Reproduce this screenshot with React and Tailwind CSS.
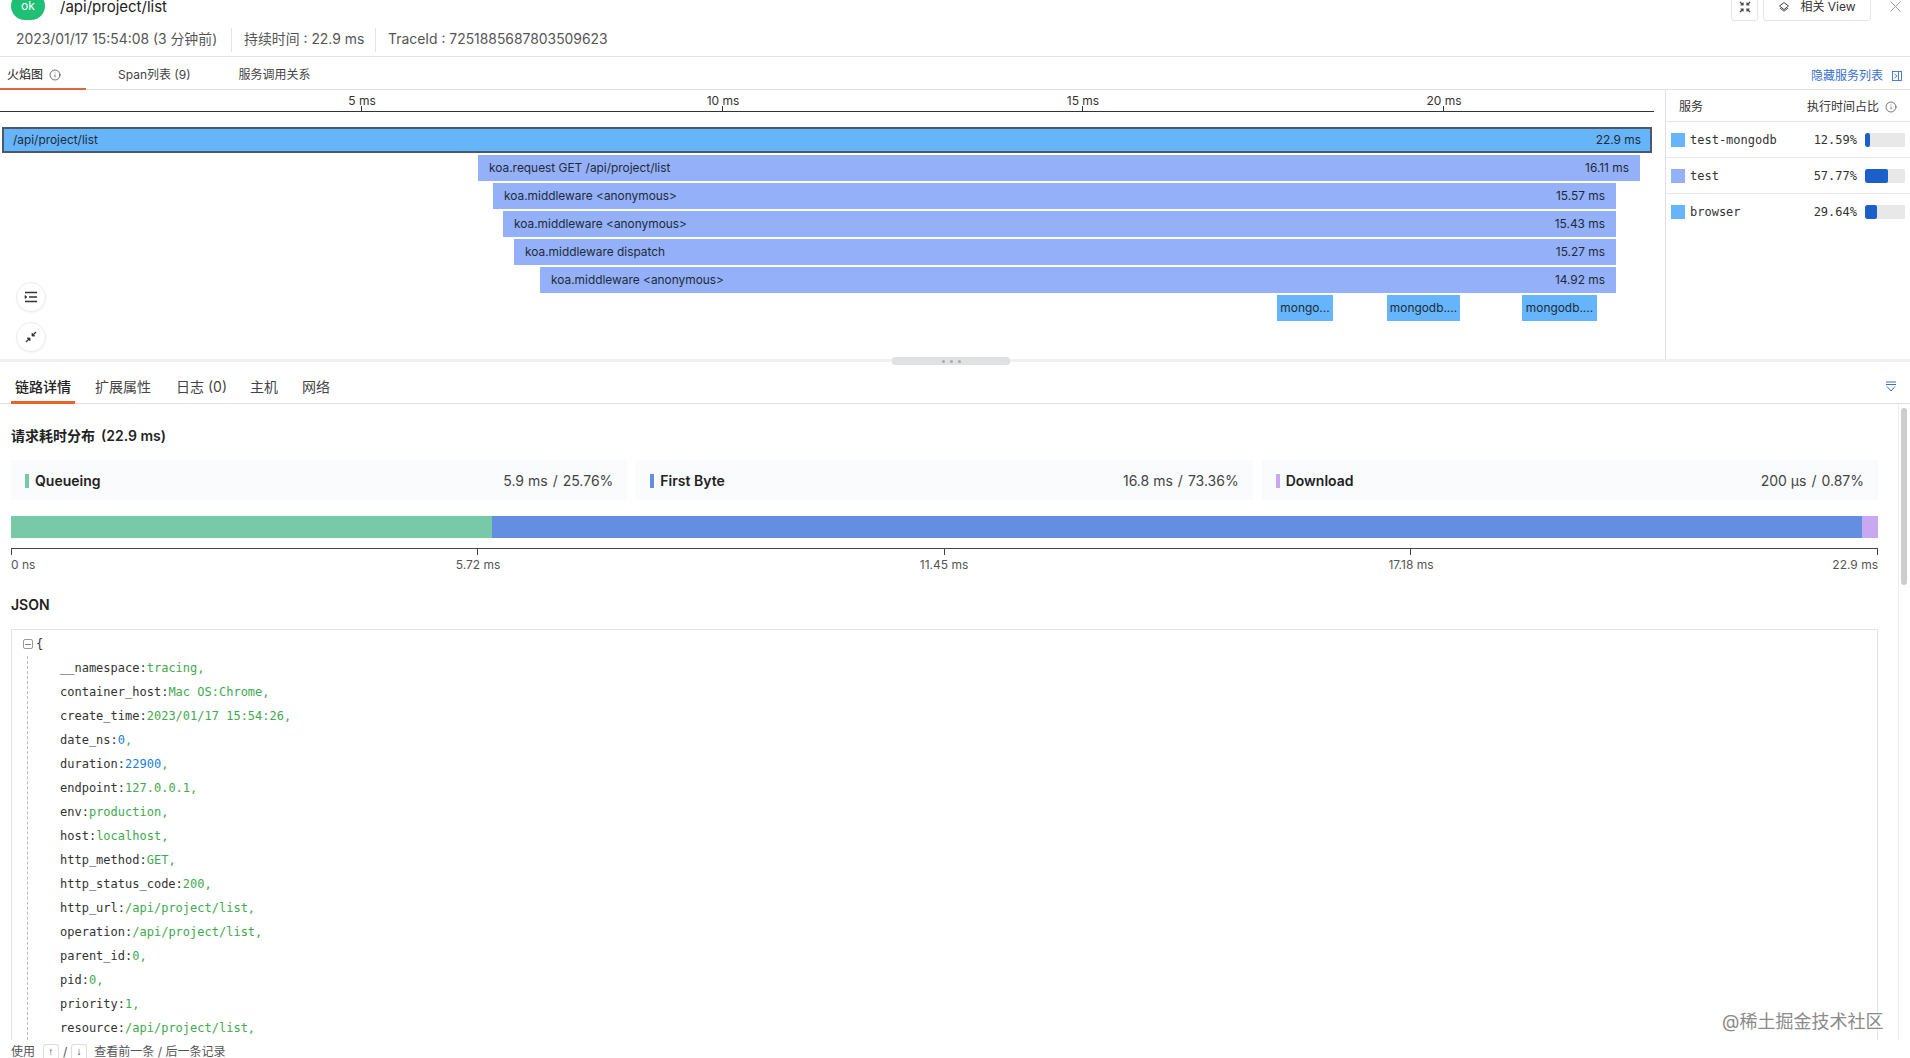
import { Info } from 'lucide-react'

const SANS = 'font-["Inter","Noto_Sans_CJK_SC",sans-serif]'
const MONO = 'font-["DejaVu_Sans_Mono",monospace]'

const flameRows = [
  { label: 'koa.request GET /api/project/list', time: '16.11 ms', width: 'ml-[478px] w-[1162px]' },
  { label: 'koa.middleware <anonymous>', time: '15.57 ms', width: 'ml-[493px] w-[1123px]' },
  { label: 'koa.middleware <anonymous>', time: '15.43 ms', width: 'ml-[503px] w-[1113px]' },
  { label: 'koa.middleware dispatch', time: '15.27 ms', width: 'ml-[514px] w-[1102px]' },
  { label: 'koa.middleware <anonymous>', time: '14.92 ms', width: 'ml-[540px] w-[1076px]' },
]

const services = [
  { name: 'test-mongodb', pct: '12.59%', fill: 'w-[5px]', swatch: 'bg-[#66b5fb]' },
  { name: 'test', pct: '57.77%', fill: 'w-[23px]', swatch: 'bg-[#94b0f8]' },
  { name: 'browser', pct: '29.64%', fill: 'w-[12px]', swatch: 'bg-[#66b5fb]' },
]

const G = 'text-[#3fa950]'
const B = 'text-[#1a7fd8]'
const jsonLines = [
  ['__namespace', 'tracing', G],
  ['container_host', 'Mac OS:Chrome', G],
  ['create_time', '2023/01/17 15:54:26', G],
  ['date_ns', '0', B],
  ['duration', '22900', B],
  ['endpoint', '127.0.0.1', G],
  ['env', 'production', G],
  ['host', 'localhost', G],
  ['http_method', 'GET', G],
  ['http_status_code', '200', G],
  ['http_url', '/api/project/list', G],
  ['operation', '/api/project/list', G],
  ['parent_id', '0', G],
  ['pid', '0', G],
  ['priority', '1', G],
  ['resource', '/api/project/list', G],
]

const phases = [
  { name: 'Queueing', value: '5.9 ms', pct: '25.76%', accent: 'bg-[#77c9a8]' },
  { name: 'First Byte', value: '16.8 ms', pct: '73.36%', accent: 'bg-[#648ee0]' },
  { name: 'Download', value: '200 µs', pct: '0.87%', accent: 'bg-[#c8a8f0]' },
]

function CompressIcon() {
  return (
    <svg width="12" height="12" viewBox="0 0 12 12" fill="none" stroke="#444" strokeWidth="1.2">
      <path d="M1 1l3 3M4 1.500V4H1.500M11 1L8 4M8 1.500V4h2.500M1 11l3-3M4 10.500V8H1.500M11 11L8 8M8 10.500V8h2.500" />
    </svg>
  )
}

function LayersIcon() {
  return (
    <svg width="12" height="12" viewBox="0 0 12 12" fill="none" stroke="#444" strokeWidth="1">
      <path d="M6 1.500L10.500 5 6 8.500 1.500 5z" />
      <path d="M2 7l4 3.200L10 7" />
    </svg>
  )
}

function FlameAxis() {
  const ticks = [
    { label: '5 ms', width: 'w-[362px]' },
    { label: '10 ms', width: 'w-[361px]' },
    { label: '15 ms', width: 'w-[360px]' },
    { label: '20 ms', width: 'w-[361px]' },
  ]
  return (
    <div className="flex h-[22px] w-[1654px] border-b border-[#333] text-xs text-[#333]">
      {ticks.map((t) => (
        <div key={t.label} className={`${t.width} relative h-full shrink-0`}>
          <span className="absolute right-0 top-[3px] translate-x-1/2 whitespace-nowrap leading-4">{t.label}</span>
          <span className="absolute bottom-0 right-0 h-[5px] w-px bg-[#333]" />
        </div>
      ))}
    </div>
  )
}

function ServicePanel() {
  return (
    <div className="w-[245px] shrink-0 border-l border-[#e0e0e0] text-xs text-[#333]">
      <div className="flex h-[32px] items-center justify-between border-b border-[#e5e5e5] px-[13px] pt-[2px]">
        <span>服务</span>
        <span className="flex items-center gap-[6px]">
          执行时间占比
          <Info size={12} strokeWidth={1.3} />
        </span>
      </div>
      {services.map((s) => (
        <div key={s.name} className="flex h-[36px] items-center border-b border-[#e8e8e8] pl-[5px] pr-[5px] last:border-b-0">
          <span className={`h-[14px] w-[14px] ${s.swatch}`} />
          <span className={`ml-[5px] flex-1 ${MONO} text-xs`}>{s.name}</span>
          <span className={`${MONO} text-xs`}>{s.pct}</span>
          <span className="ml-2 h-[14px] w-10 overflow-hidden rounded-[2px] bg-[#e8e8e8]">
            <span className={`block h-full rounded-[2px] bg-[#1a60c8] ${s.fill}`} />
          </span>
        </div>
      ))}
    </div>
  )
}

function FlameChart() {
  return (
    <div className="relative flex h-[272px] border-b-[3px] border-[#f0f0f0]">
      <div className="relative w-[1665px] shrink-0">
        <FlameAxis />
        <div className="mt-[15px] flex flex-col gap-[2px] text-[11.9px] text-[#1d2b3a]">
          <div className="ml-[2px] flex h-[26px] w-[1650px] items-center justify-between border-2 border-[#4a5a6a] bg-[#66b5fb] px-[9px]">
            <span>/api/project/list</span>
            <span>22.9 ms</span>
          </div>
          {flameRows.map((r, i) => (
            <div key={i} className={`${r.width} flex h-[26px] items-center justify-between bg-[#94b0f8] px-[11px]`}>
              <span>{r.label}</span>
              <span>{r.time}</span>
            </div>
          ))}
          <div className="flex h-[26px]">
            <div className="ml-[1277px] flex w-[56px] items-center justify-center bg-[#66b5fb]">mongo...</div>
            <div className="ml-[54px] flex w-[73px] items-center justify-center bg-[#66b5fb]">mongodb....</div>
            <div className="ml-[62px] flex w-[75px] items-center justify-center bg-[#66b5fb]">mongodb....</div>
          </div>
        </div>
        <div className="absolute left-[16px] top-[192px] flex flex-col gap-[10px]">
          <button className="flex h-[30px] w-[30px] items-center justify-center rounded-full border border-[#eee] bg-white shadow-[0_1px_2px_rgba(0,0,0,0.05)]">
            <svg width="14" height="12" viewBox="0 0 14 12" fill="none" stroke="#333" strokeWidth="1.300">
              <path d="M1 1.500h12M5 6h8M1 10.500h12" />
              <path d="M1 4.500L3 6 1 7.500z" fill="#333" strokeWidth="0.600" />
            </svg>
          </button>
          <button className="flex h-[30px] w-[30px] items-center justify-center rounded-full border border-[#eee] bg-white shadow-[0_1px_2px_rgba(0,0,0,0.05)]">
            <svg width="12" height="12" viewBox="0 0 12 12" fill="none" stroke="#333" strokeWidth="1.300">
              <path d="M11 1L7.500 4.500M1 11l3.500-3.500" />
              <path d="M7 2v3h3M2 7h3v3" fill="#333" strokeWidth="0.800" />
            </svg>
          </button>
        </div>
      </div>
      <ServicePanel />
      <div className="absolute bottom-[-6px] left-[892px] flex h-[8px] w-[118px] items-center justify-center gap-[5px] rounded-[3px] bg-[#dfe1e3]">
        <span className="h-[3px] w-[3px] rounded-full bg-[#aaa]" />
        <span className="h-[3px] w-[3px] rounded-full bg-[#aaa]" />
        <span className="h-[3px] w-[3px] rounded-full bg-[#aaa]" />
      </div>
    </div>
  )
}

function Breakdown() {
  const ticks = [
    { label: '5.72 ms', width: 'w-[466px]' },
    { label: '11.45 ms', width: 'w-[467px]' },
    { label: '17.18 ms', width: 'w-[466px]' },
  ]
  return (
    <div className="pl-[11px] pr-[32px]">
      <h3 className="flex h-[20px] items-center gap-[6px] text-sm font-semibold text-[#222]">
        <span>请求耗时分布</span>
        <span>(22.9 ms)</span>
      </h3>
      <div className="mt-[14px] flex gap-[9px]">
        {phases.map((p) => (
          <div key={p.name} className="flex h-[40px] flex-1 items-center bg-[#fafbfc] pl-[14px] pr-[14px] pt-[1px] text-sm">
            <span className={`h-[14px] w-[4px] ${p.accent}`} />
            <span className="ml-[6px] flex-1 font-semibold text-[#222]">{p.name}</span>
            <span className="text-[#444]">{p.value}</span>
            <span className="mx-[5px] text-[#444]">/</span>
            <span className="text-[#444]">{p.pct}</span>
          </div>
        ))}
      </div>
      <div className="mt-[16px] flex h-[22px]">
        <div className="w-[481px] bg-[#77c9a8]" />
        <div className="flex-1 bg-[#648ee0]" />
        <div className="w-[16px] bg-[#c8a8f0]" />
      </div>
      <div className="mt-[10px] flex h-[7px] border-x border-t border-[#444]">
        {ticks.map((t) => (
          <div key={t.label} className={`${t.width} h-full shrink-0 border-r border-[#444]`} />
        ))}
      </div>
      <div className="relative mt-[2px] h-[16px] text-xs leading-4 text-[#555]">
        <span className="absolute left-0">0 ns</span>
        {ticks.map((t, i) => (
          <span key={t.label} className={`absolute -translate-x-1/2 whitespace-nowrap ${i === 0 ? 'left-[467px]' : i === 1 ? 'left-[933px]' : 'left-[1400px]'}`}>
            {t.label}
          </span>
        ))}
        <span className="absolute right-0">22.9 ms</span>
      </div>
    </div>
  )
}

function JsonView() {
  return (
    <div className="pl-[11px] pr-[32px]">
      <h3 className="mt-[22px] flex h-[20px] items-center text-sm font-semibold text-[#222]">JSON</h3>
      <div className={`mt-[14px] h-[411px] overflow-hidden border-x border-t border-[#e3e3e3] pl-[11px] pt-[2px] ${MONO} text-xs text-[#333]`}>
        <div className="flex h-[24px] items-center">
          <span className="flex h-[10px] w-[10px] items-center justify-center rounded-[2px] border border-[#999]">
            <span className="h-px w-[6px] bg-[#888]" />
          </span>
          <span className="ml-[3px]">{'{'}</span>
        </div>
        <div className="ml-[4px] border-l border-dashed border-[#bbb] pl-[32px]">
          {jsonLines.map(([key, value, color]) => (
            <div key={key} className="flex h-[24px] items-center whitespace-pre">
              <span>{key}:</span>
              <span className={color}>{value}</span>
              <span className={G}>,</span>
            </div>
          ))}
        </div>
      </div>
    </div>
  )
}

export default function App() {
  return (
    <div className={`${SANS} relative h-screen w-full overflow-hidden bg-white`}>
      {/* Header */}
      <div className="-mt-[8px] flex h-[29px] items-center pl-[11px]">
        <span className="flex h-[28px] w-[34px] -translate-y-[1px] items-center justify-center rounded-full bg-[#1fbf75] text-xs text-white">ok</span>
        <span className="ml-[15px] mt-[2px] text-[15px] text-[#222]">/api/project/list</span>
        <div className="ml-auto flex items-center pr-[9px]">
          <button className="flex h-[28px] w-[27px] items-center justify-center rounded-[3px] border border-[#e5e5e5]">
            <CompressIcon />
          </button>
          <button className="ml-[5px] flex h-[28px] w-[108px] items-center justify-center gap-[10px] rounded-[3px] border border-[#e5e5e5] text-xs text-[#333]">
            <LayersIcon />
            相关 View
          </button>
          <svg className="ml-[19px]" width="11" height="11" viewBox="0 0 11 11" stroke="#999" strokeWidth="1">
            <path d="M0.500 0.500l10 10M10.500 0.500l-10 10" />
          </svg>
        </div>
      </div>
      <div className="flex h-[36px] items-center border-b border-[#e3e3e3] pl-[16px] pt-[2px] text-[13.9px] text-[#555]">
        <span className="w-[215px]">2023/01/17 15:54:08 (3 分钟前)</span>
        <span className="h-[24px] w-px bg-[#e5e5e5]" />
        <span className="ml-[12px] w-[131px]">持续时间 : 22.9 ms</span>
        <span className="h-[24px] w-px bg-[#e5e5e5]" />
        <span className="ml-[12px]">TraceId : 7251885687803509623</span>
      </div>

      {/* Flame chart tabs */}
      <div className="flex h-[33px] items-center border-b border-[#e3e3e3] pt-[3px] text-xs text-[#444]">
        <div className="relative flex h-full w-[86px] items-center gap-[6px] pl-[7px] text-[#222]">
          火焰图
          <Info size={12} strokeWidth={1.3} />
          <span className="absolute bottom-[-1px] left-0 h-[2px] w-full bg-[#e0683a]" />
        </div>
        <span className="ml-[32px]">Span列表 (9)</span>
        <span className="ml-[48px]">服务调用关系</span>
        <span className="ml-auto flex items-center gap-[9px] pr-[8px] pt-[2px] text-[#3a6fd0]">
          隐藏服务列表
          <svg width="10" height="10" viewBox="0 0 10 10" fill="none" stroke="#3a6fd0" strokeWidth="0.900">
            <rect x="0.500" y="0.500" width="9" height="9" />
            <path d="M6.500 1v8M2.500 3L5 5 2.500 7" />
          </svg>
        </span>
      </div>

      <FlameChart />

      {/* Detail tabs */}
      <div className="flex h-[42px] items-center border-b border-[#e0e0e0] pl-[15px] pr-[13px] pt-[8px] text-sm text-[#444]">
        <div className="relative flex h-full items-center font-medium text-[#222]">
          链路详情
          <span className="absolute bottom-[-1px] -left-[4px] h-[3px] w-[64px] bg-[#e8622c]" />
        </div>
        <span className="ml-[24px]">扩展属性</span>
        <span className="ml-[25px]">日志 (0)</span>
        <span className="ml-[23px]">主机</span>
        <span className="ml-[24px]">网络</span>
        <svg className="ml-auto" width="12" height="12" viewBox="0 0 12 12" fill="none" stroke="#3a6fd0" strokeWidth="1">
          <path d="M1 1h10M1 3.500h10M2 5.500L6 10l4-4.500" />
        </svg>
      </div>

      {/* Detail body */}
      <div className="relative h-[636px]">
        <div className="pt-[22px]">
          <Breakdown />
          <JsonView />
        </div>
        <div className="absolute bottom-0 right-[11px] top-0 w-px bg-[#ececec]" />
        <div className="absolute right-[3px] top-[4px] h-[177px] w-[6px] rounded-full bg-[#cdcdcd]" />
      </div>

      {/* Footer hint */}
      <div className="absolute bottom-0 left-0 flex h-[18px] w-full items-center bg-white pl-[11px] pt-[6px] text-xs text-[#555]">
        使用
        <kbd className="ml-[8px] flex h-[17px] w-[16px] items-center justify-center rounded-t-[3px] border border-b-0 border-[#ddd] text-[10px] font-bold text-[#333]">↑</kbd>
        <span className="mx-[4px]">/</span>
        <kbd className="flex h-[17px] w-[16px] items-center justify-center rounded-t-[3px] border border-b-0 border-[#ddd] text-[10px] font-bold text-[#333]">↓</kbd>
        <span className="ml-[7px]">查看前一条 / 后一条记录</span>
      </div>

      {/* Watermark */}
      <div className="absolute left-[1722px] top-[1011px] text-lg leading-[22px] text-[#8a8a8a] [text-shadow:0_0_2px_#fff]">
        @稀土掘金技术社区
      </div>
    </div>
  )
}
